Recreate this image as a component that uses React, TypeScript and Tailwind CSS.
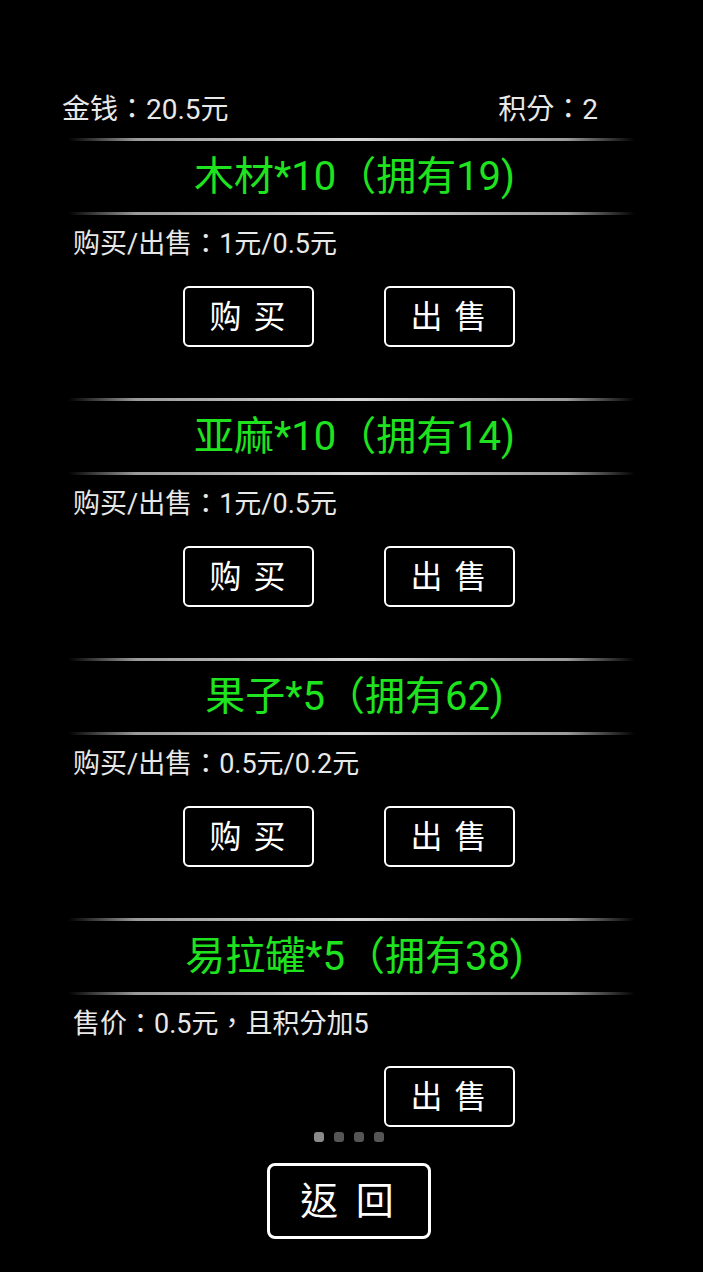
import React from "react";

type Item = {
  title: string;
  price: string;
  canBuy: boolean;
};

const items: Item[] = [
  { title: "木材*10（拥有19)", price: "购买/出售：1元/0.5元", canBuy: true },
  { title: "亚麻*10（拥有14)", price: "购买/出售：1元/0.5元", canBuy: true },
  { title: "果子*5（拥有62)", price: "购买/出售：0.5元/0.2元", canBuy: true },
  { title: "易拉罐*5（拥有38)", price: "售价：0.5元，且积分加5", canBuy: false },
];

function Divider() {
  return (
    <div className="mx-[68px] h-[3px] bg-[linear-gradient(to_right,transparent,#9a9a9a_12%,#d8d8d8_50%,#9a9a9a_88%,transparent)]" />
  );
}

function TradeButton({ label, hidden }: { label: string; hidden?: boolean }) {
  return (
    <button
      className={`flex h-[61px] w-[131px] items-center justify-center rounded-[6px] border-2 border-white bg-black text-[32px] tracking-[2px] text-white ${
        hidden ? "invisible" : ""
      }`}
    >
      {label}
    </button>
  );
}

function Section({ item, first }: { item: Item; first: boolean }) {
  return (
    <section className={first ? "mt-[13px]" : "mt-[51px]"}>
      <Divider />
      <div className="flex h-[71px] items-center justify-center pl-[6px] text-[40px] text-[#1fe31f]">
        {item.title}
      </div>
      <Divider />
      <p className="mt-[14px] h-[30px] pl-[73px] text-[27px] leading-[30px] text-[#e8e8e8]">{item.price}</p>
      <div className="mt-[27px] flex gap-[70px] pl-[183px]">
        <TradeButton label="购 买" hidden={!item.canBuy} />
        <TradeButton label="出 售" />
      </div>
    </section>
  );
}

export default function App() {
  return (
    <div
      className="min-h-[1272px] w-[703px] overflow-hidden bg-black text-white"
      style={{ fontFamily: "Roboto, 'Noto Sans CJK TC', sans-serif" }}
    >
      <div className="mt-[95px] flex h-[30px] justify-between pl-[62px] pr-[105px] text-[28px] leading-[30px] text-[#e8e8e8]">
        <span>金钱：20.5元</span>
        <span>积分：2</span>
      </div>

      {items.map((item, i) => (
        <Section key={item.title} item={item} first={i === 0} />
      ))}

      <div className="mt-[5px] flex justify-center gap-[10px] pr-[5px]">
        <span className="h-[10px] w-[10px] rounded-[3px] bg-[#8a8a8a]" />
        <span className="h-[10px] w-[10px] rounded-[3px] bg-[#555]" />
        <span className="h-[10px] w-[10px] rounded-[3px] bg-[#555]" />
        <span className="h-[10px] w-[10px] rounded-[3px] bg-[#555]" />
      </div>

      <div className="mt-[21px] flex pl-[267px]">
        <button className="flex h-[76px] w-[164px] items-center justify-center rounded-[8px] border-[3px] border-white bg-black text-[38px] tracking-[4px] text-white">
          返 回
        </button>
      </div>
    </div>
  );
}
